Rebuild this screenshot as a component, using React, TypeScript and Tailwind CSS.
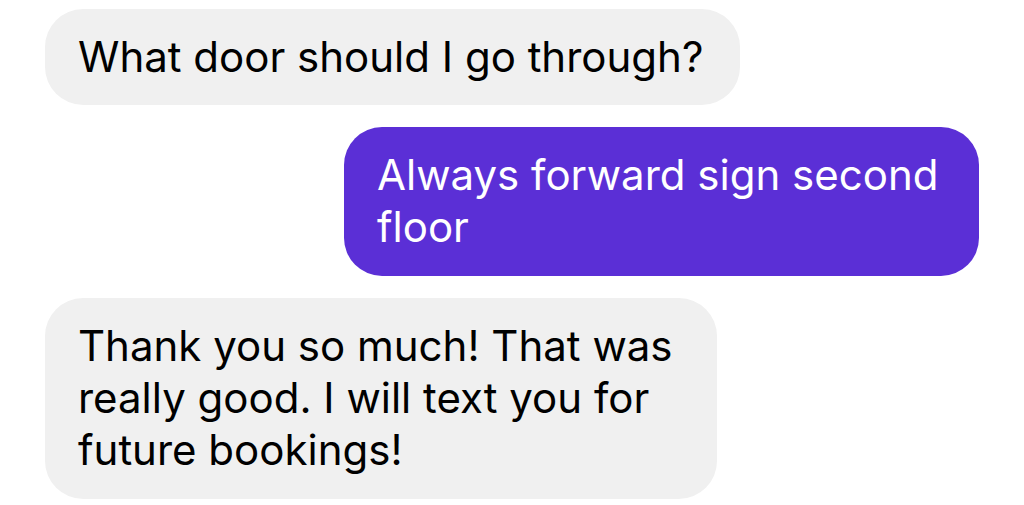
import * as React from 'react';

const font = { fontFamily: 'Inter, "Noto Sans", sans-serif' };

export default function App() {
  return (
    <div className="w-[1024px] h-[505px] bg-white overflow-hidden flex flex-col gap-[22px] pt-[9px] px-[45px] text-[42px] leading-[52px] tracking-normal" style={font}>
      <div className="self-start rounded-[38px] bg-[#f0f0f0] py-[22px] pl-[33px] pr-[37px] text-black">
        What door should I go through?
      </div>
      <div className="self-end w-[635px] rounded-[38px] bg-[#5b2fd6] pt-[22px] pb-[23px] pl-[33px] pr-[33px] text-white">
        Always forward sign second<br />floor
      </div>
      <div className="self-start w-[672px] rounded-[38px] bg-[#f0f0f0] pt-[22px] pb-[23px] pl-[33px] pr-[33px] text-black">
        Thank you so much! That was<br />really good. I will text you for<br />future bookings!
      </div>
    </div>
  );
}
